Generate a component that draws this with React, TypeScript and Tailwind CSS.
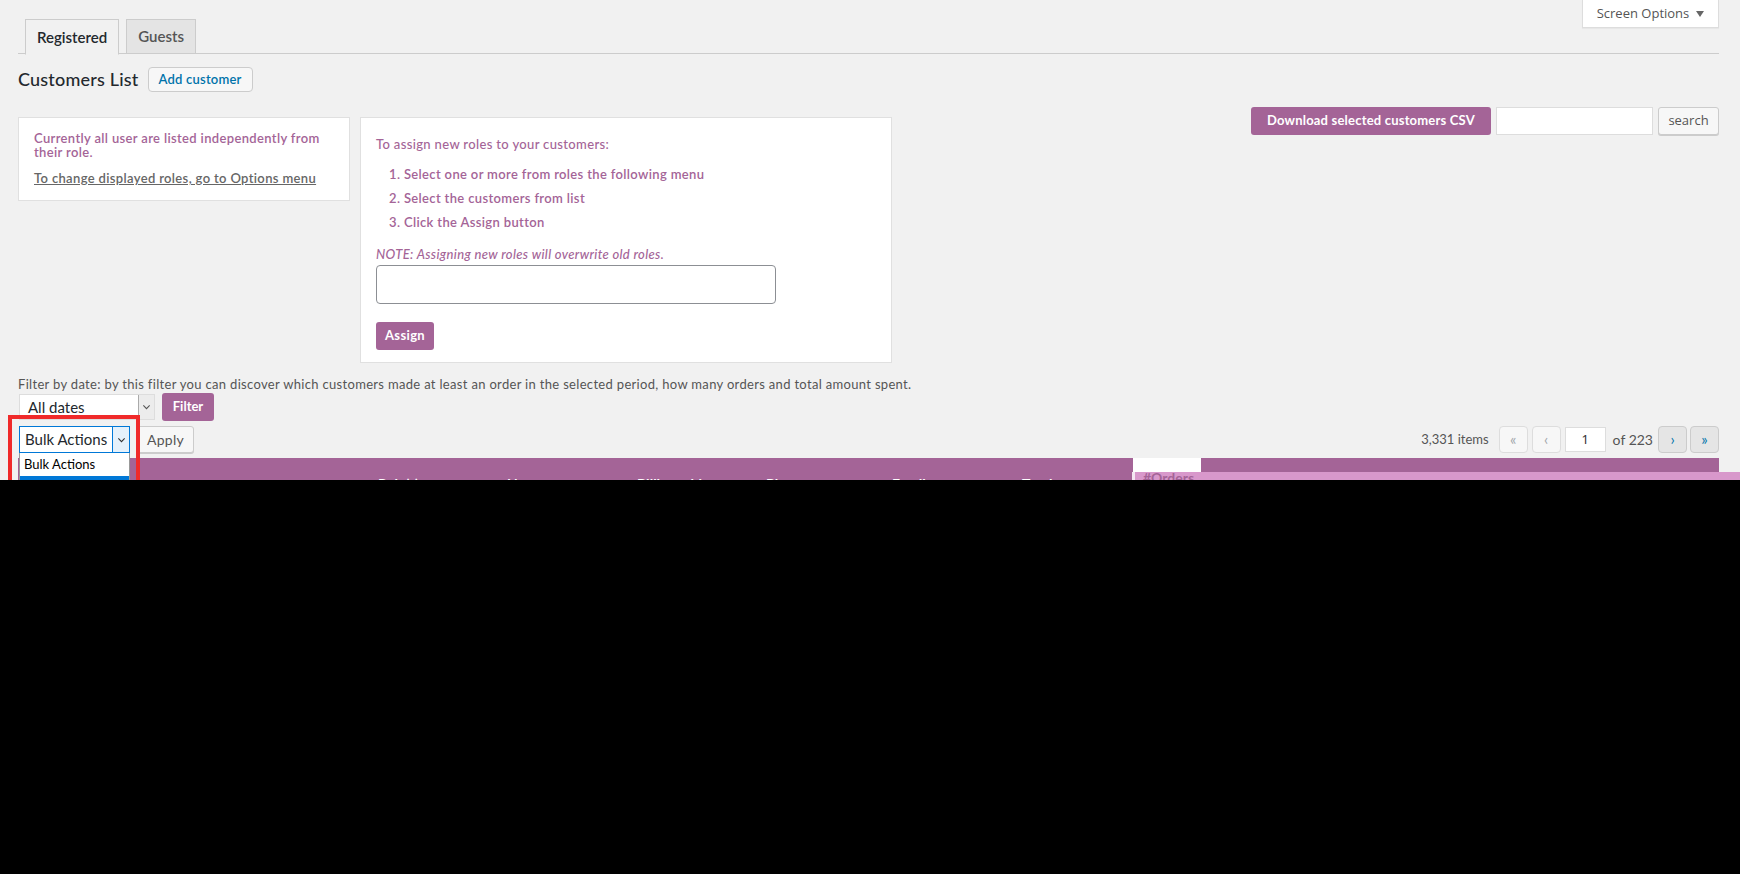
const columns = [
  { label: '', w: 'w-[92px]' },
  { label: 'Customer', w: 'w-[258px]' },
  { label: 'Role(s)', w: 'w-[129px]' },
  { label: 'Notes', w: 'w-[130px]' },
  { label: 'Billing address', w: 'w-[129px]' },
  { label: 'Phone', w: 'w-[126px]' },
  { label: 'Email', w: 'w-[130px]' },
  { label: 'Total spent', w: 'w-[121px]' },
];

const steps = [
  'Select one or more from roles the following menu',
  'Select the customers from list',
  'Click the Assign button',
];

function Chevron({ className }: { className?: string }) {
  return (
    <svg viewBox="0 0 10 6" className={className} fill="none" stroke="currentColor" strokeWidth="1.2">
      <path d="M1.5 1.2 5 4.8 8.5 1.2" />
    </svg>
  );
}

function PageButton({ label, active }: { label: string; active?: boolean }) {
  return (
    <span
      className={
        active
          ? 'flex h-[27px] w-[29px] items-center justify-center rounded-sm border border-[#ccc] bg-[#e5e5e5] text-[15px] text-[#0073aa]'
          : 'flex h-[27px] w-[29px] items-center justify-center rounded-sm border border-[#ddd] bg-[#f7f7f7] text-[15px] text-[#a0a5aa]'
      }
    >
      {label}
    </span>
  );
}

export default function App() {
  return (
    <div className="flex h-[874px] w-[1740px] flex-col overflow-hidden font-[Lato,sans-serif]">
      <div className="relative h-[480px] shrink-0 overflow-hidden bg-[#f1f1f1]">
        {/* Screen options tab */}
        <div className="absolute right-[21px] top-0 flex h-[28px] w-[137px] items-center justify-center gap-[7px] border border-t-0 border-[#ddd] bg-white font-['Open_Sans',sans-serif] text-[13px] text-[#555] shadow-[0_1px_1px_rgba(0,0,0,0.04)]">
          Screen Options
          <svg viewBox="0 0 8 6" className="h-[6px] w-[8px] text-[#666]" fill="currentColor">
            <path d="M0 0h8L4 6z" />
          </svg>
        </div>

        <div className="pl-[18px] pr-[21px] pt-[19px]">
          {/* Tabs */}
          <div className="flex h-[35px] gap-[7px] border-b border-[#ccc] pl-[7px]">
            <span className="-mb-px flex h-[36px] items-center border border-[#ccc] border-b-[#f1f1f1] bg-[#f1f1f1] px-[11px] text-[15px] font-semibold text-[#23282d]">
              Registered
            </span>
            <span className="flex h-[35px] items-center border border-[#ccc] bg-[#e4e4e4] px-[11px] text-[15px] font-semibold text-[#555]">
              Guests
            </span>
          </div>

          {/* Title */}
          <div className="mt-[13px] flex h-[25px] items-center">
            <h1 className="text-[18px] font-medium tracking-[0.2px] text-[#23282d]">Customers List</h1>
            <span className="ml-[9px] flex h-[25px] w-[105px] items-center justify-center rounded-sm border border-[#ccc] bg-[#f7f7f7] text-[13px] font-semibold tracking-[0.2px] text-[#0073aa]">
              Add customer
            </span>
          </div>

          {/* Info boxes + CSV/search */}
          <div className="mt-[15px] flex items-start">
            <div className="mt-[10px] flex items-start gap-[10px]">
              <div className="h-[84px] w-[332px] border border-[#e0e0e0] bg-white px-[15px] pt-[13px] text-[13px] font-semibold tracking-[0.35px] text-[#a46497]">
                <p className="w-[296px] leading-[14px]">Currently all user are listed independently from their role.</p>
                <p className="mt-[12px] leading-[14px] text-[#666] underline">To change displayed roles, go to Options menu</p>
              </div>
              <div className="h-[246px] w-[532px] border border-[#e0e0e0] bg-white px-[15px] pt-[17px] text-[13px] tracking-[0.35px] text-[#a46497]">
                <p className="font-medium leading-[18px]">To assign new roles to your customers:</p>
                <ol className="mt-[12px] flex flex-col gap-[6px] pl-[13px] font-semibold">
                  {steps.map((s, i) => (
                    <li key={i} className="leading-[18px]">
                      {i + 1}. {s}
                    </li>
                  ))}
                </ol>
                <p className="mt-[15px] font-medium italic leading-[16px]">NOTE: Assigning new roles will overwrite old roles.</p>
                <div className="mt-[3px] h-[39px] w-[400px] rounded-[4px] border border-[#8c8f94] bg-white" />
                <span className="mt-[18px] flex h-[28px] w-[58px] items-center justify-center rounded-[3px] bg-[#a46497] text-[13px] font-bold text-white">
                  Assign
                </span>
              </div>
            </div>

            <div className="ml-auto flex items-center gap-[5px]">
              <span className="flex h-[28px] w-[240px] items-center justify-center rounded-[3px] bg-[#a46497] text-[13px] font-bold tracking-[0.2px] text-white">
                Download selected customers CSV
              </span>
              <div className="h-[28px] w-[157px] border border-[#ddd] bg-white" />
              <span className="flex h-[28px] w-[61px] items-center justify-center rounded-[3px] border border-[#ccc] bg-[#f7f7f7] font-['Open_Sans',sans-serif] text-[13px] text-[#555] shadow-[0_1px_0_#ccc]">
                search
              </span>
            </div>
          </div>

          {/* Date filter */}
          <p className="mt-[13px] whitespace-nowrap text-[13px] leading-[16px] tracking-[0.32px] text-[#555]">
            Filter by date: by this filter you can discover which customers made at least an order in the selected period, how many orders and total amount spent.
          </p>
          <div className="mt-[1px] flex h-[28px] items-center gap-[7px] pl-px">
            <div className="flex h-[26px] w-[136px] items-stretch border border-[#ddd] bg-white">
              <span className="flex flex-1 items-center whitespace-nowrap pl-[8px] text-[15px] text-[#23282d]">All dates</span>
              <span className="flex w-[16px] items-center justify-center border-l border-[#aaa] bg-[#ececec] text-[#555]">
                <Chevron className="h-[6px] w-[9px]" />
              </span>
            </div>
            <span className="flex h-[28px] w-[52px] items-center justify-center rounded-[3px] bg-[#a46497] text-[13px] font-bold text-white">
              Filter
            </span>
          </div>

          {/* Bulk actions + pagination */}
          <div className="mt-[5px] flex h-[27px] items-center">
            <div className="ml-px flex h-[27px] w-[111px] items-stretch border border-[#0078d7] bg-white">
              <span className="flex flex-1 items-center whitespace-nowrap pl-[5px] text-[15px] text-[#23282d]">Bulk Actions</span>
              <span className="flex w-[17px] shrink-0 items-center justify-center border-l border-[#0078d7] bg-[#e5f1fb] text-[#333]">
                <Chevron className="h-[6px] w-[9px]" />
              </span>
            </div>
            <span className="ml-[7px] flex h-[27px] w-[57px] items-center justify-center rounded-[3px] border border-[#ccc] bg-[#f7f7f7] text-[14px] tracking-[0.3px] text-[#555] shadow-[0_1px_0_#ccc]">
              Apply
            </span>

            <div className="ml-auto flex items-center text-[13px] text-[#555]">
              <span className="mr-[10px]">3,331 items</span>
              <PageButton label="«" />
              <span className="ml-[4px]"><PageButton label="‹" /></span>
              <span className="ml-[4px] flex h-[25px] w-[41px] items-center justify-center border border-[#ddd] bg-white font-['Noto_Sans',sans-serif] text-[13px] text-[#333]">
                1
              </span>
              <span className="ml-[7px] mr-[5px] text-[14px]">of 223</span>
              <PageButton label="›" active />
              <span className="ml-[3px]"><PageButton label="»" active /></span>
            </div>
          </div>

          {/* Table header */}
          <div className="mt-[5px] flex h-[40px] bg-[#a46497] text-[14px] font-bold text-white">
            {columns.map((c, i) => (
              <div key={i} className={`${c.w} shrink-0 whitespace-nowrap pl-[10px] pt-[15px]`}>
                {c.label}
              </div>
            ))}
            <div className="relative z-10 h-[14px] w-[68px] shrink-0 whitespace-nowrap bg-white pl-[10px] pt-[9px] text-[#a46497]">
              #Orders
            </div>
          </div>
        </div>

        {/* Hovered row strip */}
        <div className="absolute left-[1132px] right-0 top-[472px] h-[20px] border-l-[3px] border-[#f4e6f1] bg-[#d898cb]" />

        {/* Open bulk actions menu */}
        <div className="absolute left-[19px] top-[453px] w-[111px] border border-t-0 border-[#999] bg-white">
          <div className="flex h-[23px] items-center pl-[4px] text-[13px] text-black">Bulk Actions</div>
          <div className="h-[20px] bg-[#0078d7]" />
        </div>

        {/* Highlight frame */}
        <div className="absolute left-[8px] top-[415px] h-[90px] w-[132px] border-[4px] border-[#f02a2a]" />
      </div>
      <div className="flex-1 bg-black" />
    </div>
  );
}
